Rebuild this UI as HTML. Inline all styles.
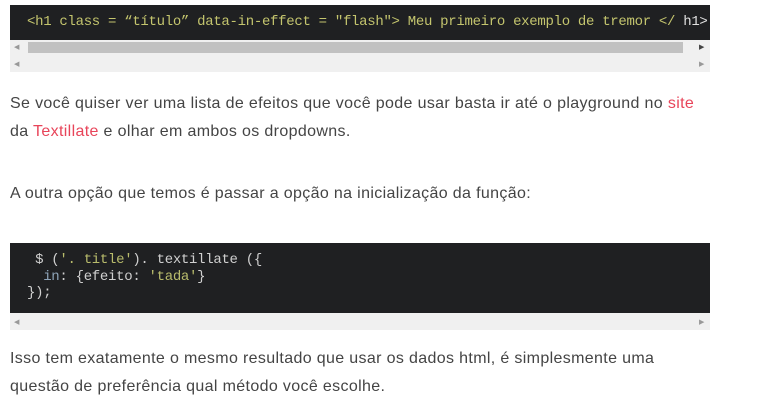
<!DOCTYPE html>
<html><head><meta charset="utf-8"><style>
body{margin:0;width:773px;height:411px;background:#fff;position:relative;overflow:hidden;font-family:"Liberation Sans",sans-serif;}
.code{position:absolute;left:10px;width:700px;background:#1f2022;color:#d0d0d0;font-family:"Liberation Mono",monospace;font-size:14px;letter-spacing:-0.3px;white-space:pre;padding-left:17px;box-sizing:border-box;}
.bar{position:absolute;left:10px;width:700px;background:#f0f0f0;}
.arr{position:absolute;font-size:7px;color:#999;}
p{position:absolute;left:10px;margin:0;font-size:16px;letter-spacing:0.35px;color:#444;line-height:28px;white-space:nowrap;}
a{color:#e8455a;text-decoration:none;}
.s{color:#b9bc6c}.k{color:#8ea4b8}
</style></head><body>
<div class="code" style="top:5px;height:35px;line-height:35px;color:#c4c56e;">&lt;h1 class = “título” data-in-effect = "flash"&gt; Meu primeiro exemplo de tremor &lt;/ <span style="color:#e0e0e0">h1&gt;</span></div>
<div class="bar" style="top:40px;height:32px;"></div>
<div style="position:absolute;left:28px;top:42px;width:655px;height:11px;background:#c1c1c1;"></div>
<span class="arr" style="left:14px;top:43px">◀</span><span class="arr" style="left:699px;top:43px;color:#444">▶</span>
<span class="arr" style="left:14px;top:60px">◀</span><span class="arr" style="left:699px;top:60px">▶</span>
<p style="top:90px">Se você quiser ver uma lista de efeitos que você pode usar basta ir até o playground no <a>site</a><br>da <a>Textillate</a> e olhar em ambos os dropdowns.</p>
<p style="top:180px">A outra opção que temos é passar a opção na inicialização da função:</p>
<div class="code" style="top:243px;height:70px;line-height:16.5px;padding-top:9px;"> $ (<span class="s">'. title'</span>). textillate ({
  <span class="k">in</span>: {efeito: <span class="s">'tada'</span>}
});</div>
<div class="bar" style="top:313px;height:17px;"></div>
<span class="arr" style="left:14px;top:318px">◀</span><span class="arr" style="left:699px;top:318px">▶</span>
<p style="top:345px">Isso tem exatamente o mesmo resultado que usar os dados html, é simplesmente uma<br>questão de preferência qual método você escolhe.</p>
</body></html>
